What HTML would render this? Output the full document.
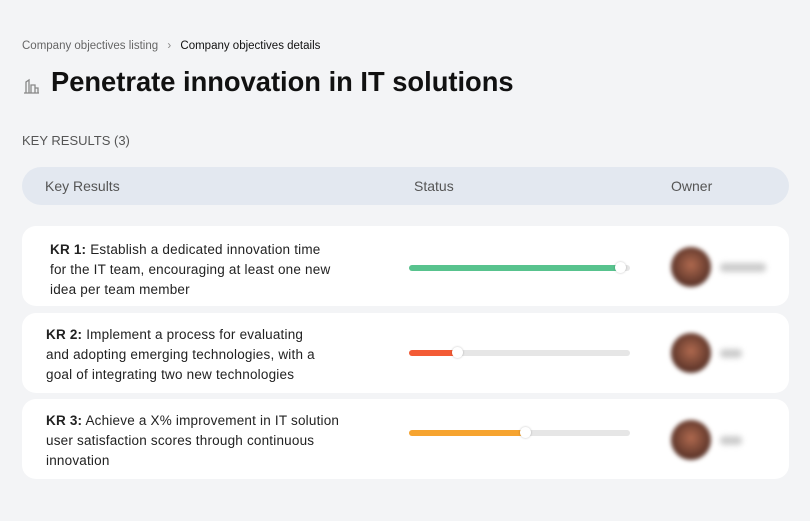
<!DOCTYPE html><html><head><style>
body{margin:0;width:810px;height:521px;background:#f3f4f6;font-family:"Liberation Sans",sans-serif;position:relative;overflow:hidden;color:#111}
.a{position:absolute}
.row{position:absolute;left:22px;width:767px;background:#fff;border-radius:14px}
.kr{position:absolute;font-size:13.5px;line-height:20px;color:#222;white-space:nowrap;letter-spacing:0.2px}
.track{position:absolute;left:409px;width:221px;height:6px;border-radius:3px;background:#e6e6e6}
.fill{position:absolute;left:0;top:0;height:6px;border-radius:3px}
.knob{position:absolute;top:-3px;width:11px;height:11px;border-radius:50%;background:#fff;box-shadow:0 0 2px rgba(0,0,0,.25)}
.av{position:absolute;left:671px;width:40px;height:40px;border-radius:50%;background:radial-gradient(circle at 50% 45%,#b06a4f,#5a3328 70%);filter:blur(2px)}
.nm{position:absolute;left:720px;width:46px;height:9px;background:#ccc;filter:blur(3px);border-radius:4px}
</style></head><body>
<div class="a" style="left:22px;top:40px;font-size:11.5px;color:#666">Company objectives listing <span style="margin:0 6px;color:#888">›</span> <span style="color:#111">Company objectives details</span></div>
<div class="a" style="left:22px;top:76px"><svg width="18" height="18" viewBox="0 0 18 18" fill="none" stroke="#888" stroke-width="1.3"><path d="M2 17h15M4 17V6l3-2v13M9 17V9h4v8M13 17v-5h3v5"/></svg></div>
<div class="a" style="left:51px;top:66px;font-size:27.3px;font-weight:bold">Penetrate innovation in IT solutions</div>
<div class="a" style="left:22px;top:133px;font-size:13px;color:#555">KEY RESULTS (3)</div>
<div class="a" style="left:22px;top:167px;width:767px;height:38px;background:#e3e8f0;border-radius:19px;font-size:14px;color:#555">
<span class="a" style="left:23px;top:11px">Key Results</span><span class="a" style="left:392px;top:11px">Status</span><span class="a" style="left:649px;top:11px">Owner</span></div>
<div class="row" style="top:226px;height:80px"></div>
<div class="row" style="top:313px;height:80px"></div>
<div class="row" style="top:399px;height:80px"></div>
<div class="kr" style="left:50px;top:240px"><b>KR 1:</b> Establish a dedicated innovation time<br>for the IT team, encouraging at least one new<br>idea per team member</div>
<div class="kr" style="left:46px;top:325px"><b>KR 2:</b> Implement a process for evaluating<br>and adopting emerging technologies, with a<br>goal of integrating two new technologies</div>
<div class="kr" style="left:46px;top:411px"><b>KR 3:</b> Achieve a X% improvement in IT solution<br>user satisfaction scores through continuous<br>innovation</div>
<div class="track" style="top:265px"><div class="fill" style="width:214px;background:#58c38e"></div><div class="knob" style="left:206px"></div></div>
<div class="track" style="top:350px"><div class="fill" style="width:50px;background:#f35b35"></div><div class="knob" style="left:43px"></div></div>
<div class="track" style="top:430px"><div class="fill" style="width:118px;background:#f6a430"></div><div class="knob" style="left:111px"></div></div>
<div class="av" style="top:247px"></div><div class="nm" style="top:263px"></div>
<div class="av" style="top:333px"></div><div class="nm" style="top:349px;width:22px"></div>
<div class="av" style="top:420px"></div><div class="nm" style="top:436px;width:22px"></div>
</body></html>
